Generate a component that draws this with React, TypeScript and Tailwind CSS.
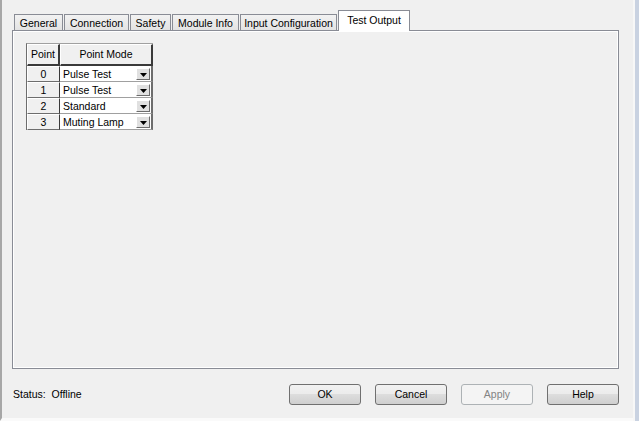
import React from 'react';

const tabs = [
  { label: 'General', w: 'w-[49px]' },
  { label: 'Connection', w: 'w-[65px]' },
  { label: 'Safety', w: 'w-[41px]' },
  { label: 'Module Info', w: 'w-[67px]' },
  { label: 'Input Configuration', w: 'w-[97px]' },
];

const points = [
  { point: '0', mode: 'Pulse Test' },
  { point: '1', mode: 'Pulse Test' },
  { point: '2', mode: 'Standard' },
  { point: '3', mode: 'Muting Lamp' },
];

function DropButton() {
  return (
    <div className="mr-px flex h-[12px] w-[14px] items-end justify-center border border-t-white border-l-white border-r-[#6d6d6d] border-b-[#6d6d6d] bg-[#e0e0e0] pb-[2px]">
      <svg width="7" height="4" viewBox="0 0 7 4">
        <path d="M0 0h7L3.5 4z" fill="#000" />
      </svg>
    </div>
  );
}

function DialogButton({ label, disabled }: { label: string; disabled?: boolean }) {
  return (
    <button
      className={
        disabled
          ? 'h-[21px] w-[72px] rounded-[3px] border border-[#adb2b5] bg-[#f4f4f4] text-[#838383]'
          : 'h-[21px] w-[72px] rounded-[3px] border border-[#707070] bg-[linear-gradient(#f2f2f2_0%,#ebebeb_50%,#dddddd_50%,#cfcfcf_100%)] text-black'
      }
    >
      {label}
    </button>
  );
}

export default function App() {
  return (
    <div className="flex h-[421px] w-[639px] bg-[#f0f0f0] font-['Liberation_Sans',Arial,sans-serif] text-[10.5px] text-black">
      <div className="flex flex-1 flex-col border-l-2 border-b-[3px] border-l-[#a7a7a7] border-b-[#fafafa] pl-[10px] pt-[10px]">
        {/* tabs */}
        <div className="flex h-[20px] items-end gap-px pl-[2px]">
          {tabs.map(t => (
            <div
              key={t.label}
              className={`${t.w} flex h-[16px] items-center justify-center border border-b-0 border-[#898c95] bg-[linear-gradient(#f2f2f2,#e3e3e3)] pt-px leading-none`}
            >
              {t.label}
            </div>
          ))}
          <div className="relative z-10 -mb-px flex h-[21px] w-[72px] items-center justify-center border border-b-0 border-[#898c95] bg-white pb-[2px] leading-none">
            Test Output
          </div>
        </div>

        {/* panel */}
        <div className="h-[339px] w-[607px] border border-[#898c95] bg-[#f0f0f0] shadow-[inset_1px_1px_0_#fff,inset_-1px_-1px_0_#fff]">
          <div className="ml-[13px] mt-[12px] w-[127px] border-l border-t border-l-[#6d6d6d] border-t-[#a0a0a0]">
            <div className="flex h-[22px]">
              <div className="flex w-[33px] items-center justify-center border-t border-l border-t-white border-l-white border-r-2 border-b-2 border-r-[#3a3a3a] border-b-[#3a3a3a] leading-none">
                Point
              </div>
              <div className="flex flex-1 items-center justify-center border-t border-l border-t-white border-l-white border-r-2 border-b-2 border-r-[#3a3a3a] border-b-[#3a3a3a] leading-none">
                Point Mode
              </div>
            </div>
            {points.map(p => (
              <div key={p.point} className="flex h-[16px]">
                <div className="flex w-[33px] items-center justify-center border-t border-l border-t-white border-l-white border-r border-b border-r-[#3a3a3a] border-b-[#6d6d6d] pt-px leading-none">
                  {p.point}
                </div>
                <div className="flex flex-1 items-center justify-between border-b border-r-2 border-b-[#a0a0a0] border-r-[#6d6d6d] bg-white pl-[3px]">
                  <span className="pt-px leading-none">{p.mode}</span>
                  <DropButton />
                </div>
              </div>
            ))}
          </div>
        </div>

        {/* bottom bar */}
        <div className="mt-[15px] flex w-[607px] items-center justify-between">
          <span className="pl-px">Status:&nbsp; Offline</span>
          <div className="flex gap-[14px]">
            <DialogButton label="OK" />
            <DialogButton label="Cancel" />
            <DialogButton label="Apply" disabled />
            <DialogButton label="Help" />
          </div>
        </div>
      </div>
      <div className="w-[6px] border-l-2 border-[#f7f7f7] bg-[#c9d2e1]" />
    </div>
  );
}
